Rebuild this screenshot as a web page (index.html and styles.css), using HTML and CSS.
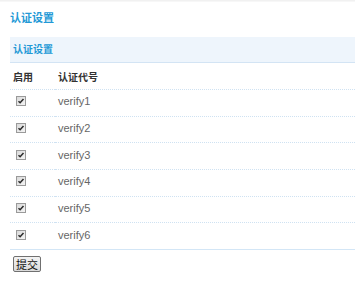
FILE: index.html
```html
<!DOCTYPE html>
<html>
<head>
<meta charset="utf-8">
<link rel="stylesheet" href="styles.css">
</head>
<body>
<div class="topline"></div>
<div class="page">
  <h1 class="title">认证设置</h1>
  <div class="panel">
    <div class="panel-head">认证设置</div>
    <table class="grid">
      <thead>
        <tr><th class="c1">启用</th><th>认证代号</th></tr>
      </thead>
      <tbody>
        <tr><td class="c1"><svg class="cb" viewBox="0 0 10 10" width="10" height="10"><defs><linearGradient id="g" x1="0" y1="0" x2="1" y2="1"><stop offset="0" stop-color="#d8d8d8"/><stop offset="1" stop-color="#f6f6f6"/></linearGradient></defs><rect x="0.5" y="0.5" width="9" height="9" fill="url(#g)" stroke="#9a9a9a"/><path d="M2.5 5.3 L4.1 6.8 L7.5 3" fill="none" stroke="#2a2a2a" stroke-width="1.5"/></svg></td><td class="name">verify1</td></tr>
        <tr><td class="c1"><svg class="cb" viewBox="0 0 10 10" width="10" height="10"><rect x="0.5" y="0.5" width="9" height="9" fill="url(#g)" stroke="#9a9a9a"/><path d="M2.5 5.3 L4.1 6.8 L7.5 3" fill="none" stroke="#2a2a2a" stroke-width="1.5"/></svg></td><td class="name">verify2</td></tr>
        <tr><td class="c1"><svg class="cb" viewBox="0 0 10 10" width="10" height="10"><rect x="0.5" y="0.5" width="9" height="9" fill="url(#g)" stroke="#9a9a9a"/><path d="M2.5 5.3 L4.1 6.8 L7.5 3" fill="none" stroke="#2a2a2a" stroke-width="1.5"/></svg></td><td class="name">verify3</td></tr>
        <tr><td class="c1"><svg class="cb" viewBox="0 0 10 10" width="10" height="10"><rect x="0.5" y="0.5" width="9" height="9" fill="url(#g)" stroke="#9a9a9a"/><path d="M2.5 5.3 L4.1 6.8 L7.5 3" fill="none" stroke="#2a2a2a" stroke-width="1.5"/></svg></td><td class="name">verify4</td></tr>
        <tr><td class="c1"><svg class="cb" viewBox="0 0 10 10" width="10" height="10"><rect x="0.5" y="0.5" width="9" height="9" fill="url(#g)" stroke="#9a9a9a"/><path d="M2.5 5.3 L4.1 6.8 L7.5 3" fill="none" stroke="#2a2a2a" stroke-width="1.5"/></svg></td><td class="name">verify5</td></tr>
        <tr class="last"><td class="c1"><svg class="cb" viewBox="0 0 10 10" width="10" height="10"><rect x="0.5" y="0.5" width="9" height="9" fill="url(#g)" stroke="#9a9a9a"/><path d="M2.5 5.3 L4.1 6.8 L7.5 3" fill="none" stroke="#2a2a2a" stroke-width="1.5"/></svg></td><td class="name">verify6</td></tr>
      </tbody>
    </table>
  </div>
  <div class="actions"><button class="btn" type="button">提交</button></div>
</div>
</body>
</html>
```

FILE: styles.css
```css
html, body {
  margin: 0;
  padding: 0;
  background: #ffffff;
}
body {
  font-family: "Liberation Sans", "Noto Sans CJK SC", sans-serif;
  font-size: 11px;
  color: #333;
}
.topline {
  height: 2px;
  background: linear-gradient(#eeeeee, #fafafa);
}
.page {
  padding-left: 10px;
}
.title {
  margin: 0;
  padding-top: 10px;
  font-size: 11px;
  line-height: 12px;
  font-weight: bold;
  color: #2399d6;
}
.panel {
  margin-top: 13px;
}
.panel-head {
  height: 25px;
  line-height: 25px;
  padding-left: 3px;
  background: #eef5fc;
  border-bottom: 1px solid #d3e4f4;
  font-size: 10px;
  font-weight: bold;
  color: #2399d6;
}
.grid {
  width: 100%;
  border-collapse: collapse;
}
.grid th {
  height: 26px;
  padding: 0 0 0 3px;
  text-align: left;
  font-size: 10px;
  font-weight: bold;
  color: #333;
  border-bottom: 1px dotted #cfe2f2;
}
.grid th.c1 {
  width: 42px;
}
.grid td {
  height: 22.7px;
  padding: 0 0 3px 3px;
  border-bottom: 1px dotted #cfe2f2;
  vertical-align: middle;
}
.grid td.c1 {
  padding-left: 6px;
}
.grid tr.last td {
  border-bottom: 1px solid #d3e6f6;
}
.cb {
  display: block;
}
.name {
  color: #666;
  font-size: 11px;
}
.actions {
  padding: 6px 0 0 3px;
}
.btn {
  margin: 0;
  height: 16px;
  padding: 0 2px;
  font-family: "Noto Sans CJK SC", sans-serif;
  font-size: 11px;
  line-height: 14px;
  color: #111;
  background: linear-gradient(#f3f3f3, #dadada);
  border: 1px solid #707070;
  border-radius: 2px;
}
```
